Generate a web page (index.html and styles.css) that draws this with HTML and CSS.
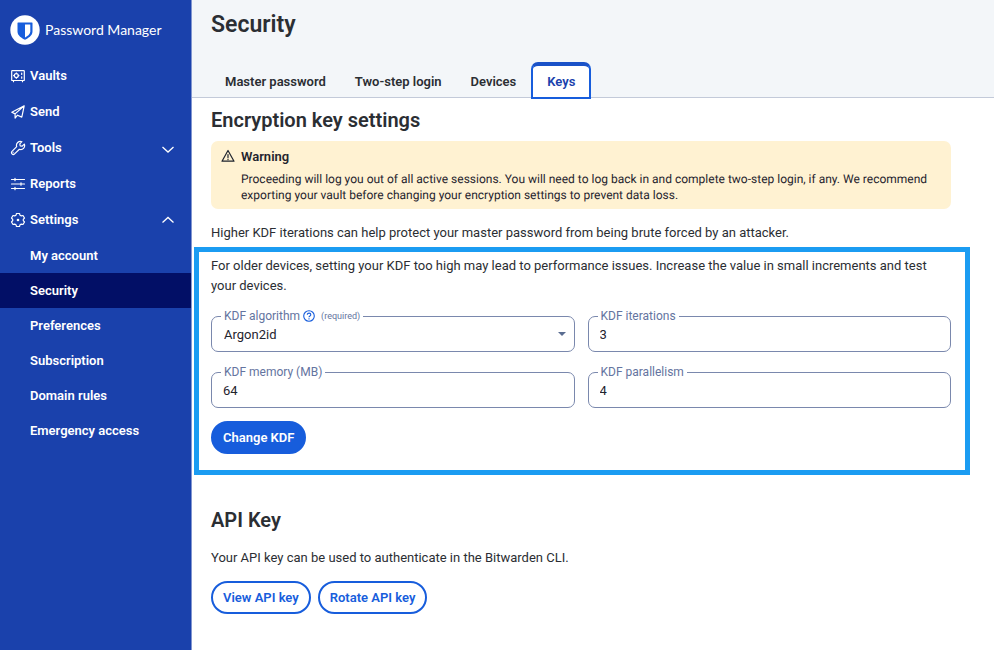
FILE: index.html
```html
<!DOCTYPE html>
<html lang="en">
<head>
    <meta charset="UTF-8">
    <title>Security | Password Manager</title>
    <link rel="stylesheet" href="styles.css">
</head>
<body>
<div class="layout">
    <aside class="sidebar">
        <a href="#" class="brand">
            <svg class="logo" viewBox="0 0 30 30">
                <circle cx="15" cy="15" r="14.7" fill="#fff"/>
                <path fill="#175ddc" d="M8 7.500h14a.5.5 0 0 1 .5.500v8.500c0 4.300-4.500 6.700-7.500 8.300-3-1.600-7.500-4-7.500-8.300V8a.5.5 0 0 1 .5-.5z"/>
                <path fill="#fff" d="M15 9.500h5.300v7c0 2.700-2.600 4.400-5.300 6z"/>
            </svg>
            <span>Password Manager</span>
        </a>
        <nav>
            <ul class="menu">
                <li><a href="#">
                    <svg class="icon" viewBox="0 0 16 16">
                        <rect x="1.700" y="2.700" width="12.600" height="9.800" rx=".6"/>
                        <circle cx="6.300" cy="7.600" r="2"/>
                        <path d="M6.300 4.900v.7M6.300 9.600v.7M3.600 7.600h.7M8.300 7.600h.7M11.700 5v1.400M11.700 8.800v1.400M3.500 12.500v1.200M12.500 12.500v1.200"/>
                    </svg>Vaults</a></li>
                <li><a href="#">
                    <svg class="icon" viewBox="0 0 16 16">
                        <path d="M14.200 1.800 1.800 8.200l3.300 1.700v4.200l2.400-2.900 4.300 1.900zM14.200 1.800 5.100 9.900"/>
                    </svg>Send</a></li>
                <li><a href="#">
                    <svg class="icon" viewBox="0 0 16 16">
                        <path d="M11.900 1.700a3.900 3.900 0 0 0-5.200 4.900L2 11.300a1.800 1.800 0 0 0 2.600 2.600l4.800-4.600a3.900 3.900 0 0 0 4.900-5.200l-2.200 2.100-1.900-.4-.4-1.900z"/>
                        <circle cx="3.400" cy="12.500" r=".2"/>
                    </svg>Tools
                    <svg class="arrow" viewBox="0 0 14 14"><path d="m1.500 6 5.500 5 5.500-5"/></svg></a></li>
                <li><a href="#">
                    <svg class="icon" viewBox="0 0 16 16">
                        <path d="M1.500 3.500h13M1.500 8h13M1.500 12.500h13M5 2.300v2.400M11 6.800v2.400M5 11.300v2.400"/>
                    </svg>Reports</a></li>
                <li><a href="#">
                    <svg class="icon" viewBox="0 0 16 16">
                        <path d="M6.500 1.500h3l.5 1.700 1.300.7 1.700-.4 1.500 2.500-1.200 1.300v1.400l1.200 1.300-1.500 2.500-1.700-.4-1.300.7-.5 1.700h-3L6 12.800l-1.300-.7-1.700.4L1.500 10l1.200-1.300V7.300L1.500 6 3 3.500l1.700.4L6 3.200z"/>
                        <circle cx="8" cy="8" r="1.300" class="dot"/>
                    </svg>Settings
                    <svg class="arrow" viewBox="0 0 14 14"><path d="m1.500 9.500 5.500-5 5.500 5"/></svg></a></li>
            </ul>
            <ul class="submenu">
                <li><a href="#">My account</a></li>
                <li class="current"><a href="#">Security</a></li>
                <li><a href="#">Preferences</a></li>
                <li><a href="#">Subscription</a></li>
                <li><a href="#">Domain rules</a></li>
                <li><a href="#">Emergency access</a></li>
            </ul>
        </nav>
    </aside>
    <div class="page">
        <header class="header">
            <h1>Security</h1>
            <nav class="tabs">
                <a href="#">Master password</a>
                <a href="#">Two-step login</a>
                <a href="#">Devices</a>
                <a href="#" class="current">Keys</a>
            </nav>
        </header>
        <main class="content">
            <h2>Encryption key settings</h2>
            <div class="callout">
                <svg class="icon" viewBox="0 0 16 16">
                    <path d="M8 2.500 2 13.200h12zM8 6.500v3M8 11.200v.4"/>
                </svg>
                <div>
                    <h3>Warning</h3>
                    <p>Proceeding will log you out of all active sessions. You will need to log back in and complete two-step login, if any. We recommend exporting your vault before changing your encryption settings to prevent data loss.</p>
                </div>
            </div>
            <p>Higher KDF iterations can help protect your master password from being brute forced by an attacker.</p>
            <form class="kdf">
                <p>For older devices, setting your KDF too high may lead to performance issues. Increase the value in small increments and test your devices.</p>
                <div class="fields">
                    <fieldset class="field">
                        <legend>
                            <label for="algorithm">KDF algorithm</label>
                            <a href="#" class="help" aria-label="Learn more"><svg viewBox="0 0 12 12">
                                <circle cx="6" cy="6" r="5.300"/>
                                <path d="M4.300 4.800c0-2.300 3.500-2.200 3.500-.1C7.800 6 6 5.900 6 7.200M6 8.300v1.100"/>
                            </svg></a>
                            <small>(required)</small>
                        </legend>
                        <div class="select">
                            <select id="algorithm">
                                <option>Argon2id</option>
                                <option>PBKDF2 SHA-256</option>
                            </select>
                        </div>
                    </fieldset>
                    <fieldset class="field">
                        <legend><label for="iterations">KDF iterations</label></legend>
                        <input type="text" id="iterations" value="3">
                    </fieldset>
                    <fieldset class="field">
                        <legend><label for="memory">KDF memory (MB)</label></legend>
                        <input type="text" id="memory" value="64">
                    </fieldset>
                    <fieldset class="field">
                        <legend><label for="parallelism">KDF parallelism</label></legend>
                        <input type="text" id="parallelism" value="4">
                    </fieldset>
                </div>
                <button type="button" class="btn primary">Change KDF</button>
            </form>
            <section class="api">
                <h2>API Key</h2>
                <p>Your API key can be used to authenticate in the Bitwarden CLI.</p>
                <div class="buttons">
                    <button type="button" class="btn">View API key</button>
                    <button type="button" class="btn">Rotate API key</button>
                </div>
            </section>
        </main>
    </div>
</div>
</body>
</html>
```
FILE: styles.css
```css
* {
    margin: 0;
    padding: 0;
    box-sizing: border-box;
}

body {
    font-family: Roboto, "Liberation Sans", sans-serif;
    font-size: 13px;
    line-height: 20px;
    color: #2b2e33;
    background-color: #fff;
}

ul {
    list-style: none;
}

a {
    color: inherit;
    text-decoration: none;
}

svg {
    fill: none;
    stroke: currentColor;
    flex: none;
}

.layout {
    display: flex;
    min-height: 100vh;
}

/* sidebar */
.sidebar {
    flex: none;
    width: 192px;
    color: #fff;
    background-color: #1a41ac;
    border-right: 1px solid #8296d0;
}

.brand {
    display: flex;
    align-items: center;
    gap: 5px;
    height: 58px;
    padding: 2px 0 0 10px;
    font-family: Lato, sans-serif;
    font-size: 14px;
}

.logo {
    width: 30px;
    height: 30px;
    stroke: none;
}

.icon {
    width: 16px;
    height: 16px;
    stroke-width: 1.2;
    stroke-linejoin: round;
    stroke-linecap: round;
}

.dot {
    fill: currentColor;
    stroke: none;
}

.menu a, .submenu a {
    display: flex;
    align-items: center;
    font-weight: 600;
}

.menu a {
    gap: 4px;
    height: 36px;
    padding: 0 16px 0 10px;
}

.submenu a {
    height: 35px;
    padding-left: 30px;
}

.submenu .current {
    background-color: #020f66;
}

.arrow {
    width: 14px;
    height: 14px;
    margin-left: auto;
    stroke-width: 1.3;
}

/* header */
.page {
    flex: 1;
    min-width: 0;
}

.header {
    height: 98px;
    padding: 9px 19px 0;
    background-color: #f3f6f9;
    border-bottom: 1px solid #c3cad9;
}

h1 {
    margin-bottom: 21px;
    font-size: 23px;
    line-height: 32px;
    font-weight: 600;
}

.tabs {
    display: flex;
    gap: 1px;
}

.tabs a {
    height: 37px;
    padding: 6px 14px;
    line-height: 28px;
    font-weight: 600;
}

.tabs .current {
    padding: 2px 14px;
    color: #1a41ac;
    background-color: #fff;
    border: 2px solid #175ddc;
    border-top: 4px solid #1a52c8;
    border-radius: 7px 7px 0 0;
}

/* content */
.content {
    padding: 8px 43px 36px 19px;
}

h2 {
    font-size: 20px;
    line-height: 28px;
    font-weight: 600;
}

.callout {
    display: flex;
    gap: 5px;
    margin: 7px 0 14px;
    padding: 6px 9px;
    color: #1f242e;
    background-color: #fff2d2;
    border-radius: 7px;
}

.callout .icon {
    margin-top: 1px;
}

.callout h3 {
    margin-bottom: 4px;
    font-size: 13px;
    line-height: 20px;
    font-weight: 600;
}

.callout p {
    font-size: 12px;
    line-height: 16px;
    text-rendering: geometricPrecision;
}

.kdf {
    margin: 4px -19px 0 -17px;
    padding: 4px 14px 16px 12px;
    border: 5px solid #1b9cf2;
}

.fields {
    display: grid;
    grid-template-columns: 1fr 1fr;
    gap: 13px;
    margin: 13px 0;
}

.field {
    min-width: 0;
    height: 43px;
    border: 1px solid #7a88ad;
    border-radius: 7px;
}

.field legend {
    display: flex;
    align-items: center;
    gap: 3px;
    height: 14px;
    margin-left: 9px;
    padding: 0 3px;
    font-size: 12px;
    line-height: 14px;
    color: #6474a0;
}

.field small {
    margin-left: 3px;
    font-size: 9px;
}

.help {
    display: flex;
    color: #175ddc;
}

.help svg {
    width: 12px;
    height: 12px;
    stroke-width: 1.1;
}

.field input, .field select {
    display: block;
    width: 100%;
    height: 24px;
    padding: 0 11px;
    font: inherit;
    color: #1f242e;
    background: none;
    border: 0;
    outline: 0;
}

.field input {
    height: 22px;
}

.field select {
    padding-left: 12px;
    appearance: none;
}

.select {
    position: relative;
}

.select::after {
    content: "";
    position: absolute;
    top: 9px;
    right: 8px;
    border: 4px solid transparent;
    border-top-color: #5a6d91;
    border-bottom: 0;
    pointer-events: none;
}

.btn {
    height: 33px;
    padding: 0 10px;
    font: inherit;
    font-weight: 600;
    color: #175ddc;
    background-color: #fff;
    border: 2px solid #175ddc;
    border-radius: 17px;
}

.btn.primary {
    color: #fff;
    background-color: #175ddc;
}

.api {
    margin-top: 31px;
}

.api p {
    margin: 14px 0 13px;
}

.buttons {
    display: flex;
    gap: 7px;
}
```
